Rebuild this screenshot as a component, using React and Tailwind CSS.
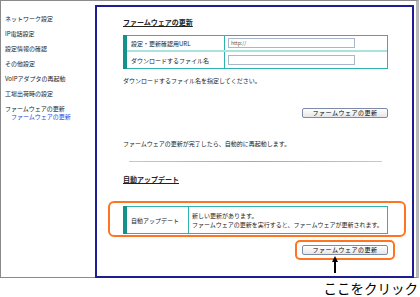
const menu = [
  'ネットワーク設定',
  'IP電話設定',
  '設定情報の確認',
  'その他設定',
  'VoIPアダプタの再起動',
  '工場出荷時の設定',
  'ファームウェアの更新',
]

function FwButton() {
  return (
    <div className="flex h-[10px] w-[86px] items-center justify-center rounded-[2px] border border-[#7d8bab] bg-gradient-to-b from-white to-[#e6e6e6] text-[6px] leading-none tracking-[0.5px] text-black">
      ファームウェアの更新
    </div>
  )
}

export default function App() {
  return (
    <div className="h-[297px] w-[420px] overflow-hidden bg-white font-['Noto_Sans_CJK_JP',sans-serif] text-[#222]">
      <div className="flex h-[278px] w-[419px] border-b border-l border-t border-[#8a8a8a] border-r-[3px] border-r-[#b9b9b9]">
        {/* Sidebar */}
        <div className="flex w-[94px] shrink-0 flex-col pl-[4px] pt-[10px] text-[6px] leading-[15px]">
          {menu.map((m) => (
            <span key={m}>{m}</span>
          ))}
          <span className="-mt-[3px] pl-[6px] leading-[8px] text-[#2a3fe0]">ファームウェアの更新</span>
        </div>

        {/* Main panel */}
        <div className="mr-[2px] mt-[4px] flex h-[273px] flex-1 flex-col border-2 border-[#1d1d96] pl-[26px] pr-[24px] pt-[10px] text-[6px]">
          <div className="text-[7px] font-bold leading-[10px] underline">ファームウェアの更新</div>

          <div className="mt-[8px] flex">
            <div className="w-[4px] bg-[#14918d]" />
            <div className="flex-1 border border-l-0 border-[#2fb1ad]">
              <div className="flex h-[16px] border-b-2 border-[#a9e2df]">
                <div className="flex w-[98px] items-center border-r border-[#2fb1ad] pl-[4px]">設定・更新確認用URL</div>
                <div className="flex flex-1 items-center pl-[3px]">
                  <div className="flex h-[10px] w-[127px] items-center border border-[#a9b6cc] pl-[2px] text-[5px] text-[#555]">http://</div>
                </div>
              </div>
              <div className="flex h-[16px]">
                <div className="flex w-[98px] items-center border-r border-[#2fb1ad] pl-[4px]">ダウンロードするファイル名</div>
                <div className="flex flex-1 items-center pl-[3px]">
                  <div className="h-[10px] w-[127px] border border-[#a9b6cc]" />
                </div>
              </div>
            </div>
          </div>

          <div className="mt-[7px] leading-[10px]">ダウンロードするファイル名を指定してください。</div>

          <div className="mt-[22px] flex justify-end">
            <FwButton />
          </div>

          <div className="mt-[21px] leading-[10px]">ファームウェアの更新が完了したら、自動的に再起動します。</div>

          <div className="mx-[6px] mt-[12px] h-px bg-gradient-to-r from-[#c8c8c8] via-[#a8a8a8] to-[#c8c8c8]" />

          <div className="mt-[12px] text-[7px] font-bold leading-[10px] underline">自動アップデート</div>

          <div className="-ml-[15px] -mr-[18px] mt-[17px] rounded-[6px] border-2 border-[#ff7420] pb-[1px] pl-[13px] pr-[16px] pt-[3px]">
            <div className="flex h-[28px]">
              <div className="w-[4px] bg-[#14918d]" />
              <div className="flex flex-1 border border-l-0 border-[#2fb1ad]">
                <div className="flex w-[62px] items-center border-r border-[#2fb1ad] pl-[4px]">自動アップデート</div>
                <div className="flex flex-1 flex-col justify-center pl-[3px] leading-[9px]">
                  <span>新しい更新があります。</span>
                  <span>ファームウェアの更新を実行すると、ファームウェアが更新されます。</span>
                </div>
              </div>
            </div>
          </div>

          <div className="-mr-[7px] mt-[3px] flex justify-end">
            <div className="relative rounded-[5px] border-2 border-[#ff7420] px-[5px] py-[3px]">
              <FwButton />
              <div className="absolute left-[35px] top-[14px] flex flex-col items-center">
                <div className="h-0 w-0 border-x-[3px] border-b-[6px] border-x-transparent border-b-black" />
                <div className="h-[11px] w-[2px] bg-black" />
              </div>
            </div>
          </div>
        </div>
      </div>

      <div className="mt-[2px] flex justify-end pr-[2px] text-[13.5px] leading-[16px] text-black">ここをクリック</div>
    </div>
  )
}
